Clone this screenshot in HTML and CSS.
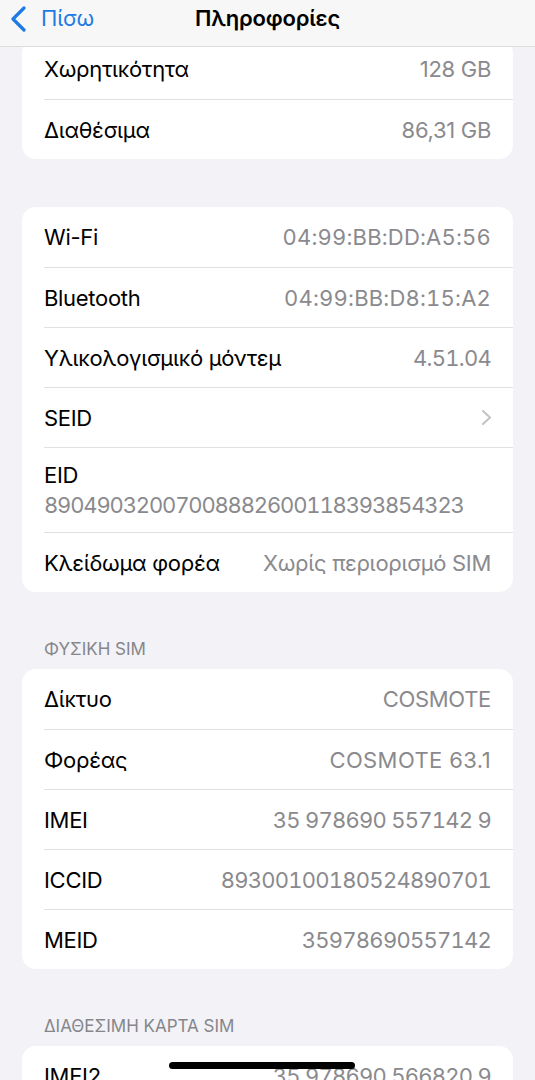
FILE: index.html
```html
<!DOCTYPE html>
<html lang="el">
<head>
  <meta charset="UTF-8" />
  <meta name="viewport" content="width=device-width, initial-scale=1" />
  <title>Πληροφορίες</title>
  <link rel="stylesheet" href="styles.css">
</head>
<body>
  <header class="navbar">
    <div class="nav-inner">
      <a class="back" href="#">
        <svg class="back-icon" width="18" height="26" viewBox="0 0 18 26">
          <path d="M15 2 L4 13 L15 24" fill="none" stroke="currentColor" stroke-width="3.2" stroke-linecap="round" stroke-linejoin="round"/>
        </svg>
        <span>Πίσω</span>
      </a>
      <h1 class="nav-title">Πληροφορίες</h1>
    </div>
  </header>

  <main class="content">
    <div class="card first">
      <div class="row"><span class="label">Χωρητικότητα</span><span class="value">128 GB</span></div>
      <div class="row"><span class="label">Διαθέσιμα</span><span class="value">86,31 GB</span></div>
    </div>

    <div class="card">
      <div class="row"><span class="label">Wi-Fi</span><span class="value num">04:99:BB:DD:A5:56</span></div>
      <div class="row"><span class="label">Bluetooth</span><span class="value num">04:99:BB:D8:15:A2</span></div>
      <div class="row"><span class="label">Υλικολογισμικό μόντεμ</span><span class="value num digits">4.51.04</span></div>
      <div class="row">
        <span class="label">SEID</span>
        <svg class="chevron" width="11" height="17" viewBox="0 0 11 17">
          <path d="M2 2 L9 8.5 L2 15" fill="none" stroke="currentColor" stroke-width="2.2" stroke-linecap="round" stroke-linejoin="round"/>
        </svg>
      </div>
      <div class="row stacked">
        <span class="label">EID</span>
        <span class="value num eid">89049032007008882600118393854323</span>
      </div>
      <div class="row"><span class="label">Κλείδωμα φορέα</span><span class="value">Χωρίς περιορισμό SIM</span></div>
    </div>

    <h2 class="section-title">ΦΥΣΙΚΗ SIM</h2>
    <div class="card">
      <div class="row"><span class="label">Δίκτυο</span><span class="value">COSMOTE</span></div>
      <div class="row"><span class="label">Φορέας</span><span class="value wide">COSMOTE 63.1</span></div>
      <div class="row"><span class="label">IMEI</span><span class="value num digits">35 978690 557142 9</span></div>
      <div class="row"><span class="label">ICCID</span><span class="value num digits">89300100180524890701</span></div>
      <div class="row"><span class="label">MEID</span><span class="value num digits">35978690557142</span></div>
    </div>

    <h2 class="section-title">ΔΙΑΘΕΣΙΜΗ ΚΑΡΤΑ SIM</h2>
    <div class="card">
      <div class="row"><span class="label">IMEI2</span><span class="value num digits">35 978690 566820 9</span></div>
    </div>
  </main>

  <div class="home-indicator"></div>
</body>
</html>
```

FILE: styles.css
```css
body {
  margin: 0;
  background: #f2f2f7;
  font-family: Inter, "Noto Sans", "DejaVu Sans", sans-serif;
  color: #000;
  overflow: hidden;
}

/* navigation bar, lies over the scrolled list */
.navbar {
  position: fixed;
  top: 0;
  left: 0;
  right: 0;
  height: 46px;
  background: #f7f7f7;
  border-bottom: 1px solid #dcdcdc;
  z-index: 2;
}
.nav-inner {
  position: relative;
  height: 36px;
  display: flex;
  align-items: center;
  justify-content: center;
}
.back {
  position: absolute;
  left: 9px;
  top: 0;
  height: 36px;
  display: flex;
  align-items: center;
  gap: 14px;
  color: #1f7ae3;
  text-decoration: none;
  font-size: 22px;
  letter-spacing: -0.2px;
}
.back-icon { margin-top: 1px; }
.nav-title {
  margin: 0;
  font-size: 22px;
  font-weight: 600;
  letter-spacing: -0.2px;
}

.content {
  padding: 39px 22px 0;
}

.card {
  background: #fff;
  border-radius: 14px;
  overflow: hidden;
  margin-top: 48px;
}
.card.first { margin-top: 0; }

.row {
  box-sizing: border-box;
  height: 60px;
  margin-left: 22px;
  padding-right: 22px;
  display: flex;
  align-items: center;
  justify-content: space-between;
  font-size: 22px;
  letter-spacing: -0.3px;
}
.row + .row { border-top: 1px solid #e1e1e4; }

.row.stacked {
  height: auto;
  padding-top: 12px;
  padding-bottom: 12px;
  flex-direction: column;
  align-items: flex-start;
}
.row.stacked .label,
.row.stacked .value { line-height: 30px; }

.value {
  color: #8a8a8e;
  white-space: nowrap;
}
.value.wide { letter-spacing: 0.4px; }
.num {
  font-variant-numeric: tabular-nums;
  letter-spacing: 0.2px;
}
.num.digits { letter-spacing: -0.75px; }
.num.eid { letter-spacing: -1.15px; }

.chevron {
  color: #c4c4c7;
  margin-right: -1px;
}

.section-title {
  margin: 47px 0 10px 22px;
  font-size: 17px;
  line-height: 20px;
  font-weight: 400;
  color: #86868b;
  letter-spacing: 0;
}
.section-title + .card { margin-top: 0; }

.home-indicator {
  position: fixed;
  left: 169px;
  top: 1062px;
  width: 186px;
  height: 7px;
  border-radius: 4px;
  background: #000;
  z-index: 3;
}
```
